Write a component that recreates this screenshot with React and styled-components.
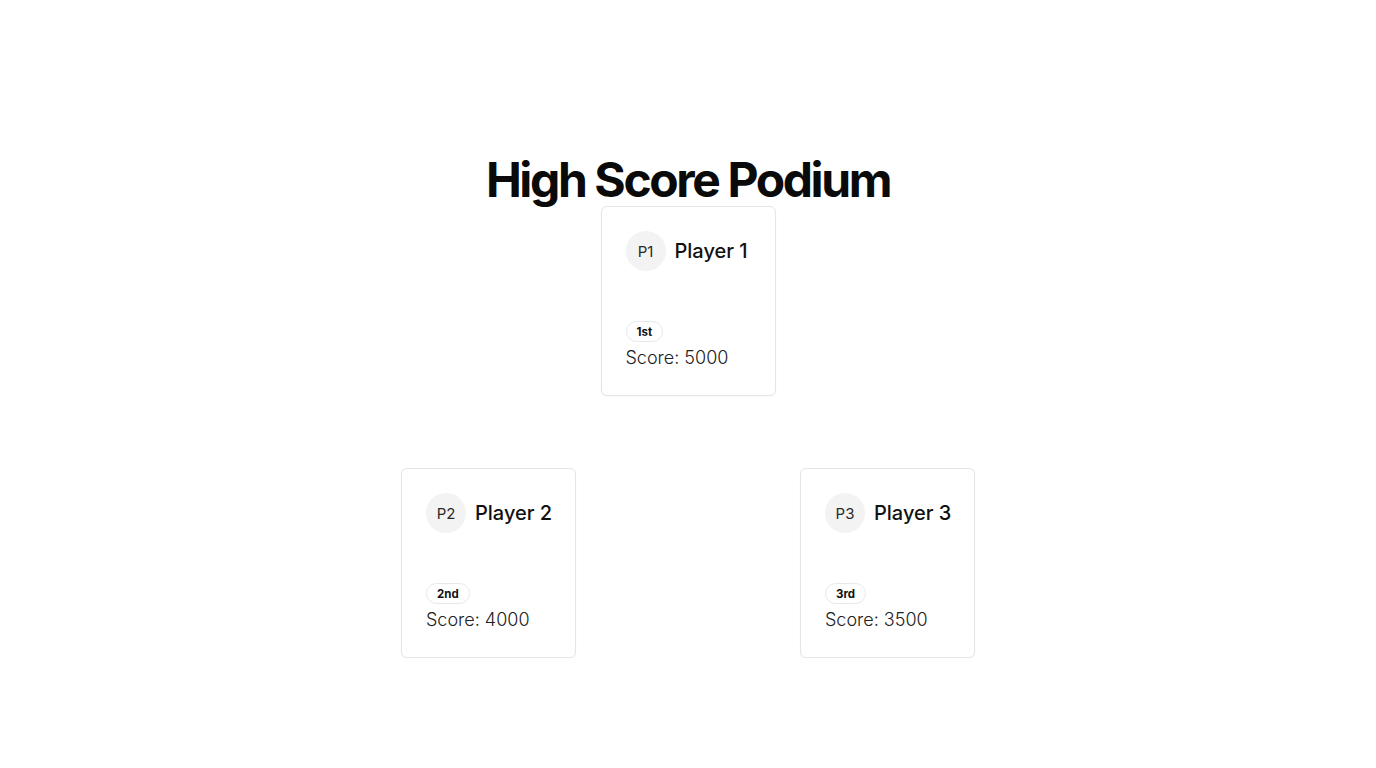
import React from 'react';
import styled, { createGlobalStyle } from 'styled-components';

const GlobalStyle = createGlobalStyle`
  body {
    margin: 0;
    background: #ffffff;
    font-family: Inter, "Noto Sans", sans-serif;
    color: #0a0a0a;
  }
`;

const Page = styled.div`
  display: flex;
  flex-direction: column;
  align-items: center;
  padding-top: 156px;
`;

const Title = styled.h1`
  margin: 0 0 2px;
  font-size: 48px;
  line-height: 48px;
  font-weight: 700;
  letter-spacing: -0.05em;
  color: #0a0a0a;
`;

const Podium = styled.div`
  display: grid;
  grid-template-columns: repeat(3, 175px);
  column-gap: 24.5px;
  row-gap: 72px;
`;

const Card = styled.div`
  grid-column: ${(p) => p.$col};
  grid-row: ${(p) => p.$row};
  box-sizing: border-box;
  height: 190px;
  display: flex;
  flex-direction: column;
  padding: 24px 24px 25px;
  border: 1px solid #e5e5e5;
  border-radius: 6px;
  background: #fff;
  box-shadow: 0 1px 2px rgba(0, 0, 0, 0.04);
`;

const Header = styled.div`
  display: flex;
  align-items: center;
  gap: 9px;
  white-space: nowrap;
`;

const Avatar = styled.div`
  flex-shrink: 0;
  width: 40px;
  height: 40px;
  border-radius: 50%;
  background: #f3f3f3;
  display: flex;
  align-items: center;
  justify-content: center;
  font-size: 15px;
  color: #2a2a2a;
`;

const Name = styled.div`
  font-size: 20px;
  font-weight: 500;
  color: #111;
`;

const Footer = styled.div`
  margin-top: auto;
  display: flex;
  flex-direction: column;
  align-items: flex-start;
  gap: 4px;
`;

const Badge = styled.span`
  box-sizing: border-box;
  height: 21px;
  display: inline-flex;
  align-items: center;
  padding: 0 10px;
  border: 1px solid #e8e8e8;
  border-radius: 999px;
  font-size: 11.5px;
  font-weight: 700;
  color: #111;
`;

const Score = styled.div`
  font-size: 18px;
  font-weight: 300;
  line-height: 24px;
  color: #222;
`;

const players = [
  { id: 'P1', name: 'Player 1', place: '1st', score: 5000, col: 2, row: 1 },
  { id: 'P2', name: 'Player 2', place: '2nd', score: 4000, col: 1, row: 2 },
  { id: 'P3', name: 'Player 3', place: '3rd', score: 3500, col: 3, row: 2 },
];

export default function App() {
  return (
    <>
      <GlobalStyle />
      <Page>
        <Title>High Score Podium</Title>
        <Podium>
          {players.map((p) => (
            <Card key={p.id} $col={p.col} $row={p.row}>
              <Header>
                <Avatar>{p.id}</Avatar>
                <Name>{p.name}</Name>
              </Header>
              <Footer>
                <Badge>{p.place}</Badge>
                <Score>Score: {p.score}</Score>
              </Footer>
            </Card>
          ))}
        </Podium>
      </Page>
    </>
  );
}
